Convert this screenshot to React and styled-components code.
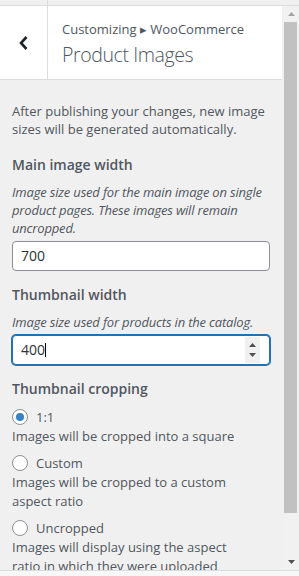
import React from "react";
import styled, { createGlobalStyle } from "styled-components";

const GlobalStyle = createGlobalStyle`
  html, body { margin: 0; padding: 0; }
  body {
    width: 299px;
    height: 576px;
    overflow: hidden;
    font-family: "Open Sans", "Noto Sans", "Liberation Sans", sans-serif;
    color: #50575e;
  }
  * { box-sizing: border-box; }
`;

const Page = styled.div`
  width: 299px;
  height: 576px;
  display: flex;
  flex-direction: column;
  background: #f0f0f1;
`;

const TopStrip = styled.div`
  height: 6px;
  flex: none;
  display: flex;
  border-bottom: 1px solid #dcdcde;
  background: #f0f0f1;
`;

const TopCell = styled.div`
  width: 48px;
  border-right: 1px solid #dcdcde;
`;

const Body = styled.div`
  flex: 1;
  min-height: 0;
  display: flex;
`;

const Panel = styled.div`
  flex: 1;
  min-width: 0;
  overflow: hidden;
  display: flex;
  flex-direction: column;
`;

const Header = styled.div`
  height: 74px;
  flex: none;
  display: flex;
  background: #fff;
  border-bottom: 1px solid #dcdcde;
`;

const BackButton = styled.button`
  width: 48px;
  flex: none;
  border: none;
  border-right: 1px solid #dcdcde;
  background: transparent;
  padding: 0;
  display: flex;
  align-items: center;
  justify-content: center;
  color: #1d2327;
`;

const TitleBlock = styled.div`
  padding-left: 14px;
  display: flex;
  flex-direction: column;
`;

const Breadcrumb = styled.span`
  margin-top: 14px;
  font-size: 13px;
  line-height: 18px;
  color: #50575e;
  white-space: nowrap;
`;

const Title = styled.h3`
  margin: 4px 0 0;
  font-size: 19.5px;
  letter-spacing: -0.4px;
  line-height: 26px;
  font-weight: 300;
  color: #50575e;
  white-space: nowrap;
`;

const Content = styled.div`
  padding: 22px 12px 0;
  display: flex;
  flex-direction: column;
`;

const Notice = styled.p`
  margin: 0;
  font-size: 13px;
  line-height: 18px;
  white-space: nowrap;
`;

const Heading = styled.span`
  margin-top: ${(p) => p.$gap}px;
  font-size: 14px;
  line-height: 18px;
  font-weight: 600;
  color: #50575e;
  white-space: nowrap;
`;

const Description = styled.span`
  margin-top: 9px;
  font-size: 13px;
  line-height: 18px;
  font-style: italic;
  letter-spacing: -0.18px;
  white-space: nowrap;
`;

const TextField = styled.div`
  margin-top: 4px;
  width: 258px;
  height: 30px;
  display: flex;
  align-items: center;
  padding: 0 9px 0 8px;
  background: #fff;
  border: 1px solid ${(p) => (p.$focused ? "#2271b1" : "#8c8f94")};
  box-shadow: ${(p) => (p.$focused ? "0 0 0 1px #2271b1" : "none")};
  border-radius: 4px;
  font-size: 14px;
  color: #2c3338;
`;

const Value = styled.span`
  line-height: 20px;
`;

const Caret = styled.span`
  width: 1px;
  height: 14px;
  background: #000;
`;

const Fill = styled.span`
  flex: 1;
`;

const Spinner = styled.span`
  align-self: stretch;
  margin: 1px 0;
  width: 15px;
  background: #f0f0f0;
  display: flex;
  flex-direction: column;
  align-items: center;
  justify-content: center;
  gap: 6px;
`;

const RadioGroup = styled.div`
  margin-top: 9px;
  display: flex;
  flex-direction: column;
`;

const Option = styled.div`
  margin-top: ${(p) => (p.$first ? 0 : 7)}px;
  display: flex;
  flex-direction: column;
`;

const RadioRow = styled.label`
  height: 20px;
  display: flex;
  align-items: center;
  gap: 8px;
  font-size: 13px;
  color: #50575e;
`;

const RadioCircle = styled.span`
  width: 16px;
  height: 16px;
  border-radius: 50%;
  border: 1px solid #8c8f94;
  background: #fff;
  display: flex;
  align-items: center;
  justify-content: center;
  &::after {
    content: "";
    display: ${(p) => (p.$checked ? "block" : "none")};
    width: 8px;
    height: 8px;
    border-radius: 50%;
    background: #3582c4;
  }
`;

const OptionText = styled.span`
  font-size: 13px;
  line-height: 19px;
  white-space: nowrap;
`;

const Scrollbar = styled.div`
  width: 17px;
  flex: none;
  background: #f1f1f1;
  display: flex;
  flex-direction: column;
`;

const ScrollButton = styled.div`
  height: 16px;
  flex: none;
  display: flex;
  align-items: center;
  justify-content: center;
  padding-left: 1px;
`;

const Thumb = styled.div`
  height: 491px;
  margin: 0 0 0 2px;
  width: 13px;
  background: #c1c1c1;
`;

const TrackRest = styled.div`
  flex: 1;
`;

const BottomStrip = styled.div`
  height: 6px;
  flex: none;
  border-top: 1px solid #dcdcde;
  background: #f6f7f7;
`;

const Tri = ({ up, color, w = 7, h = 4 }) => (
  <svg width={w} height={h} viewBox={`0 0 ${w} ${h}`}>
    <polygon
      points={up ? `0,${h} ${w / 2},0 ${w},${h}` : `0,0 ${w},0 ${w / 2},${h}`}
      fill={color}
    />
  </svg>
);

const options = [
  { label: "1:1", lines: ["Images will be cropped into a square"], checked: true },
  { label: "Custom", lines: ["Images will be cropped to a custom", "aspect ratio"] },
  {
    label: "Uncropped",
    lines: ["Images will display using the aspect", "ratio in which they were uploaded"],
  },
];

export default function App() {
  return (
    <>
      <GlobalStyle />
      <Page>
        <TopStrip>
          <TopCell />
        </TopStrip>
        <Body>
          <Panel>
            <Header>
              <BackButton aria-label="Back">
                <svg width="10" height="14" viewBox="0 0 10 14">
                  <polyline
                    points="7.5,1 2,7 7.5,13"
                    fill="none"
                    stroke="currentColor"
                    strokeWidth="2.6"
                  />
                </svg>
              </BackButton>
              <TitleBlock>
                <Breadcrumb>Customizing ▸ WooCommerce</Breadcrumb>
                <Title>Product Images</Title>
              </TitleBlock>
            </Header>
            <Content>
              <Notice>
                After publishing your changes, new image
                <br />
                sizes will be generated automatically.
              </Notice>
              <Heading $gap={18}>Main image width</Heading>
              <Description>
                Image size used for the main image on single
                <br />
                product pages. These images will remain
                <br />
                uncropped.
              </Description>
              <TextField>
                <Value>700</Value>
              </TextField>
              <Heading $gap={15}>Thumbnail width</Heading>
              <Description>Image size used for products in the catalog.</Description>
              <TextField $focused>
                <Value>400</Value>
                <Caret />
                <Fill />
                <Spinner>
                  <Tri up color="#505050" />
                  <Tri color="#505050" />
                </Spinner>
              </TextField>
              <Heading $gap={15}>Thumbnail cropping</Heading>
              <RadioGroup>
                {options.map((o, i) => (
                  <Option key={o.label} $first={i === 0}>
                    <RadioRow>
                      <RadioCircle $checked={o.checked} />
                      {o.label}
                    </RadioRow>
                    {o.lines.map((l) => (
                      <OptionText key={l}>{l}</OptionText>
                    ))}
                  </Option>
                ))}
              </RadioGroup>
            </Content>
          </Panel>
          <Scrollbar>
            <ScrollButton>
              <Tri up color="#a3a3a3" w={7} h={4} />
            </ScrollButton>
            <Thumb />
            <TrackRest />
            <ScrollButton>
              <Tri color="#505050" w={7} h={4} />
            </ScrollButton>
          </Scrollbar>
        </Body>
        <BottomStrip />
      </Page>
    </>
  );
}
